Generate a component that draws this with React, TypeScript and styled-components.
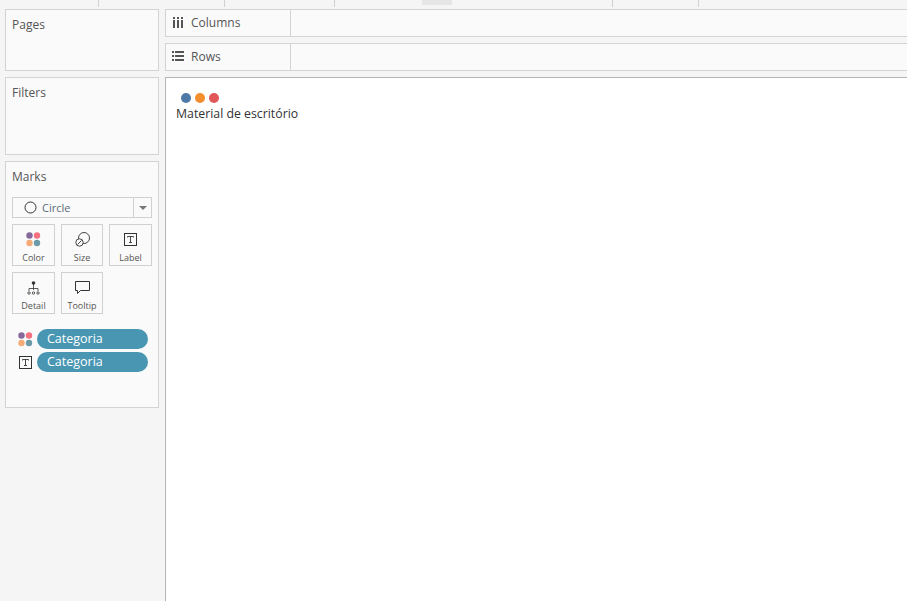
import React from "react";
import styled, { createGlobalStyle } from "styled-components";

const GlobalStyle = createGlobalStyle`
  html, body {
    margin: 0;
    height: 100%;
    background: #f5f5f5;
    overflow: hidden;
  }
  #root {
    height: 100%;
  }
`;

const Page = styled.div`
  width: 907px;
  height: 601px;
  display: flex;
  flex-direction: column;
  font-family: "Open Sans", "Liberation Sans", sans-serif;
  color: #555;
  overflow: hidden;
`;

const TopStrip = styled.div`
  height: 9px;
  flex: none;
  display: flex;
`;

const StripCell = styled.div<{ $width: number }>`
  width: ${(p) => p.$width}px;
  height: 7px;
  flex: none;
  border-right: 1px solid #d0d0d0;
  box-sizing: border-box;
`;

const StripTab = styled.div`
  width: 30px;
  height: 5px;
  flex: none;
  background: #e6e6e6;
`;

const StripGap = styled.div<{ $width: number }>`
  width: ${(p) => p.$width}px;
  flex: none;
`;

const Workspace = styled.div`
  flex: 1;
  display: flex;
  gap: 6px;
  padding-left: 5px;
  min-height: 0;
`;

const SideColumn = styled.div`
  width: 154px;
  flex: none;
  display: flex;
  flex-direction: column;
  gap: 6px;
`;

const Panel = styled.section<{ $height: number }>`
  height: ${(p) => p.$height}px;
  box-sizing: border-box;
  background: #fafafa;
  border: 1px solid #d4d4d4;
  padding: 7px 6px 0;
`;

const PanelTitle = styled.div`
  font-size: 12px;
  line-height: 16px;
  color: #555;
`;

const MarkSelect = styled.div`
  margin-top: 12px;
  height: 21px;
  box-sizing: border-box;
  border: 1px solid #d0d0d0;
  display: flex;
  align-items: center;
`;

const SelectValue = styled.div`
  flex: 1;
  display: flex;
  align-items: center;
  gap: 5px;
  padding-left: 11px;
  font-size: 11px;
  color: #5b6b78;
`;

const SelectCaret = styled.div`
  width: 18px;
  height: 100%;
  flex: none;
  box-sizing: border-box;
  border-left: 1px solid #d0d0d0;
  display: flex;
  align-items: center;
  justify-content: center;
  &::after {
    content: "";
    border-left: 4px solid transparent;
    border-right: 4px solid transparent;
    border-top: 4px solid #777;
  }
`;

const CardGrid = styled.div`
  margin-top: 6px;
  display: grid;
  grid-template-columns: 43px 42px 43px;
  grid-auto-rows: 42px;
  column-gap: 6px;
  row-gap: 6px;
`;

const MarkCard = styled.button`
  padding: 6px 0 0;
  margin: 0;
  box-sizing: border-box;
  background: #fafafa;
  border: 1px solid #d0d0d0;
  display: flex;
  flex-direction: column;
  align-items: center;
  font-family: inherit;
  font-size: 9px;
  line-height: 12px;
  color: #555;
`;

const CardIcon = styled.div`
  height: 17px;
  margin-bottom: 4px;
  display: flex;
  align-items: center;
  justify-content: center;
`;

const PillList = styled.div`
  margin-top: 15px;
  display: flex;
  flex-direction: column;
  gap: 3px;
  padding-left: 6px;
`;

const PillRow = styled.div`
  display: flex;
  align-items: center;
  gap: 4px;
`;

const PillIcon = styled.div`
  width: 15px;
  flex: none;
  display: flex;
  justify-content: center;
`;

const Pill = styled.div`
  width: 111px;
  height: 20px;
  box-sizing: border-box;
  border-radius: 10px;
  background: #4996b2;
  color: #fff;
  font-size: 12.5px;
  line-height: 19px;
  padding-left: 10px;
`;

const MainColumn = styled.div`
  flex: 1;
  min-width: 0;
  display: flex;
  flex-direction: column;
  gap: 6px;
`;

const Shelf = styled.div`
  height: 28px;
  flex: none;
  box-sizing: border-box;
  display: flex;
  background: #fafafa;
  border: 1px solid #d4d4d4;
  border-right: none;
`;

const ShelfLabel = styled.div`
  width: 125px;
  flex: none;
  box-sizing: border-box;
  border-right: 1px solid #d4d4d4;
  display: flex;
  align-items: center;
  padding: 0 0 2px 6px;
  gap: 7px;
  font-size: 12px;
  color: #555;
`;

const ShelfIcon = styled.div`
  width: 12px;
  flex: none;
  display: flex;
  justify-content: center;
`;

const View = styled.div`
  flex: 1;
  min-height: 0;
  background: #fff;
  border-top: 1px solid #b4b4b4;
  border-left: 1px solid #b4b4b4;
  padding: 8px 0 0 10px;
`;

const Legend = styled.div`
  display: inline-flex;
  flex-direction: column;
`;

const LegendDots = styled.div`
  display: flex;
  gap: 4px;
  padding-left: 5px;
`;

const LegendDot = styled.span<{ $color: string }>`
  width: 10px;
  height: 10px;
  border-radius: 50%;
  background: ${(p) => p.$color};
`;

const LegendLabel = styled.div`
  margin-top: 3px;
  font-size: 12.3px;
  line-height: 16px;
  color: #333;
`;

const ColorDotsIcon = () => (
  <svg width="15" height="15" viewBox="0 0 15 15">
    <circle cx="3.5" cy="3.5" r="3.2" fill="#86689a" />
    <circle cx="11" cy="3.5" r="3.2" fill="#f4727f" />
    <circle cx="3.5" cy="11" r="3.2" fill="#f4ab78" />
    <circle cx="11" cy="11" r="3.2" fill="#6d9aa8" />
  </svg>
);

const LabelIcon = () => (
  <svg width="14" height="13" viewBox="0 0 14 13" fill="none" stroke="#333">
    <rect x="0.5" y="0.5" width="12" height="12" />
    <path d="M3.5 4.5V3.5H9.5V4.5M6.5 3.5V9.5M5 9.5H8" strokeWidth="0.9" />
  </svg>
);

const SizeIcon = () => (
  <svg width="15" height="15" viewBox="0 0 15 15" fill="none" stroke="#333" strokeWidth="0.9">
    <circle cx="9" cy="6" r="5.5" />
    <circle cx="4.5" cy="10.5" r="3.7" fill="#fafafa" />
    <path d="M2.5 12.5L6.5 8.5" />
  </svg>
);

const DetailIcon = () => (
  <svg width="13" height="14" viewBox="0 0 13 14" fill="none" stroke="#333" strokeWidth="0.8">
    <circle cx="6.5" cy="2" r="1.8" fill="#333" stroke="none" />
    <path d="M6.5 3V9M2 10V7.5H11V10" />
    <circle cx="2" cy="12" r="1.2" />
    <circle cx="6.5" cy="12" r="1.2" />
    <circle cx="11" cy="12" r="1.2" />
  </svg>
);

const TooltipIcon = () => (
  <svg width="15" height="14" viewBox="0 0 15 14" fill="none" stroke="#333">
    <path d="M0.5 0.5H14.5V9.5H5.5L2.5 12.5V9.5H0.5Z" />
  </svg>
);

const CircleIcon = () => (
  <svg width="13" height="13" viewBox="0 0 13 13" fill="none" stroke="#333">
    <circle cx="6.5" cy="6.5" r="5.5" />
  </svg>
);

const ColumnsIcon = () => (
  <svg width="11" height="11" viewBox="0 0 11 11" fill="#555">
    <rect x="0" y="0" width="2" height="2" />
    <rect x="4" y="0" width="2" height="2" />
    <rect x="8" y="0" width="2" height="2" />
    <rect x="0" y="3" width="2" height="8" />
    <rect x="4" y="3" width="2" height="8" />
    <rect x="8" y="3" width="2" height="8" />
  </svg>
);

const RowsIcon = () => (
  <svg width="12" height="10" viewBox="0 0 12 10" fill="#555">
    <rect x="0" y="0" width="2" height="2" />
    <rect x="0" y="4" width="2" height="2" />
    <rect x="0" y="8" width="2" height="2" />
    <rect x="3" y="0" width="9" height="2" />
    <rect x="3" y="4" width="9" height="2" />
    <rect x="3" y="8" width="9" height="2" />
  </svg>
);

const cards = [
  { label: "Color", icon: <ColorDotsIcon /> },
  { label: "Size", icon: <SizeIcon /> },
  { label: "Label", icon: <LabelIcon /> },
  { label: "Detail", icon: <DetailIcon /> },
  { label: "Tooltip", icon: <TooltipIcon /> },
];

export default function App() {
  return (
    <Page>
      <GlobalStyle />
      <TopStrip>
        <StripCell $width={99} />
        <StripCell $width={126} />
        <StripCell $width={110} />
        <StripGap $width={87} />
        <StripTab />
        <StripGap $width={160} />
        <StripCell $width={1} />
        <StripCell $width={86} />
      </TopStrip>
      <Workspace>
        <SideColumn>
          <Panel $height={62}>
            <PanelTitle>Pages</PanelTitle>
          </Panel>
          <Panel $height={78}>
            <PanelTitle>Filters</PanelTitle>
          </Panel>
          <Panel $height={247}>
            <PanelTitle>Marks</PanelTitle>
            <MarkSelect>
              <SelectValue>
                <CircleIcon />
                Circle
              </SelectValue>
              <SelectCaret />
            </MarkSelect>
            <CardGrid>
              {cards.map((c) => (
                <MarkCard key={c.label}>
                  <CardIcon>{c.icon}</CardIcon>
                  {c.label}
                </MarkCard>
              ))}
            </CardGrid>
            <PillList>
              <PillRow>
                <PillIcon>
                  <ColorDotsIcon />
                </PillIcon>
                <Pill>Categoria</Pill>
              </PillRow>
              <PillRow>
                <PillIcon>
                  <LabelIcon />
                </PillIcon>
                <Pill>Categoria</Pill>
              </PillRow>
            </PillList>
          </Panel>
        </SideColumn>
        <MainColumn>
          <Shelf>
            <ShelfLabel>
              <ShelfIcon>
                <ColumnsIcon />
              </ShelfIcon>
              Columns
            </ShelfLabel>
          </Shelf>
          <Shelf>
            <ShelfLabel>
              <ShelfIcon>
                <RowsIcon />
              </ShelfIcon>
              Rows
            </ShelfLabel>
          </Shelf>
          <View>
            <Legend>
              <LegendDots>
                <LegendDot $color="#4e79a7" />
                <LegendDot $color="#f28e2b" />
                <LegendDot $color="#e15759" />
              </LegendDots>
              <LegendLabel>Material de escritório</LegendLabel>
            </Legend>
          </View>
        </MainColumn>
      </Workspace>
    </Page>
  );
}
